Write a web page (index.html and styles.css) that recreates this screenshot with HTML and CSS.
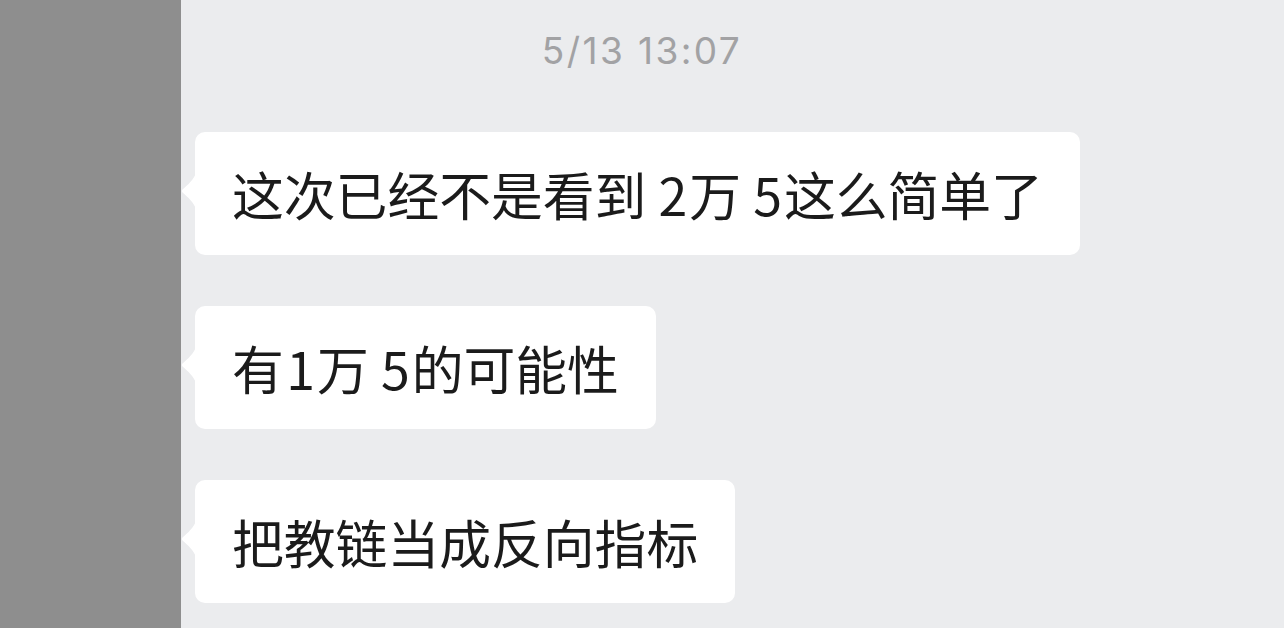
FILE: index.html
```html
<!DOCTYPE html>
<html lang="zh-CN">
<head>
<meta charset="utf-8">
<link rel="stylesheet" href="styles.css">
</head>
<body>
<div class="chat">
  <div class="time">5/13 13:07</div>
  <div class="messages">
    <div class="bubble">
      <svg class="tail" width="15" height="36" viewBox="0 0 15 36"><path d="M15 0 C13 6 7 12 1.5 16.5 Q0 18 1.5 19.5 C7 24 13 30 15 36 Z" fill="#ffffff"/></svg>
      这次已经不是看到 <span class="num">2</span>万 <span class="num">5</span>这么简单了
    </div>
    <div class="bubble">
      <svg class="tail" width="15" height="36" viewBox="0 0 15 36"><path d="M15 0 C13 6 7 12 1.5 16.5 Q0 18 1.5 19.5 C7 24 13 30 15 36 Z" fill="#ffffff"/></svg>
      有<span class="num">1</span>万 <span class="num">5</span>的可能性
    </div>
    <div class="bubble">
      <svg class="tail" width="15" height="36" viewBox="0 0 15 36"><path d="M15 0 C13 6 7 12 1.5 16.5 Q0 18 1.5 19.5 C7 24 13 30 15 36 Z" fill="#ffffff"/></svg>
      把教链当成反向指标
    </div>
  </div>
  <div class="panel"></div>
</div>
</body>
</html>
```

FILE: styles.css
```css
html, body {
  margin: 0;
  padding: 0;
}

body {
  width: 1284px;
  height: 628px;
  overflow: hidden;
  background: #ebecee;
  font-family: "Noto Sans CJK SC", "Noto Sans", sans-serif;
}

.chat {
  position: relative;
  width: 1284px;
  height: 628px;
  display: flex;
  flex-direction: column;
}

.time {
  padding-top: 29px;
  text-align: center;
  font-family: Inter, "Liberation Sans", sans-serif;
  font-size: 37px;
  line-height: 44px;
  letter-spacing: 2.4px;
  color: #a2a2a4;
}

.messages {
  display: flex;
  flex-direction: column;
  align-items: flex-start;
  gap: 51px;
  padding-left: 195px;
  margin-top: 59px;
}

.bubble {
  position: relative;
  background: #ffffff;
  border-radius: 10px;
  padding: 30px 37px;
  font-size: 51.8px;
  font-weight: 400;
  line-height: 63px;
  word-spacing: -2px;
  color: #1b1b1b;
  white-space: nowrap;
}

.num {
  margin: 0 2px 0 2.5px;
}

.tail {
  position: absolute;
  left: -14px;
  top: 50%;
  margin-top: -21px;
  display: block;
}

.panel {
  position: absolute;
  left: 0;
  top: 0;
  width: 181px;
  height: 628px;
  background: #8e8e8e;
}
```
